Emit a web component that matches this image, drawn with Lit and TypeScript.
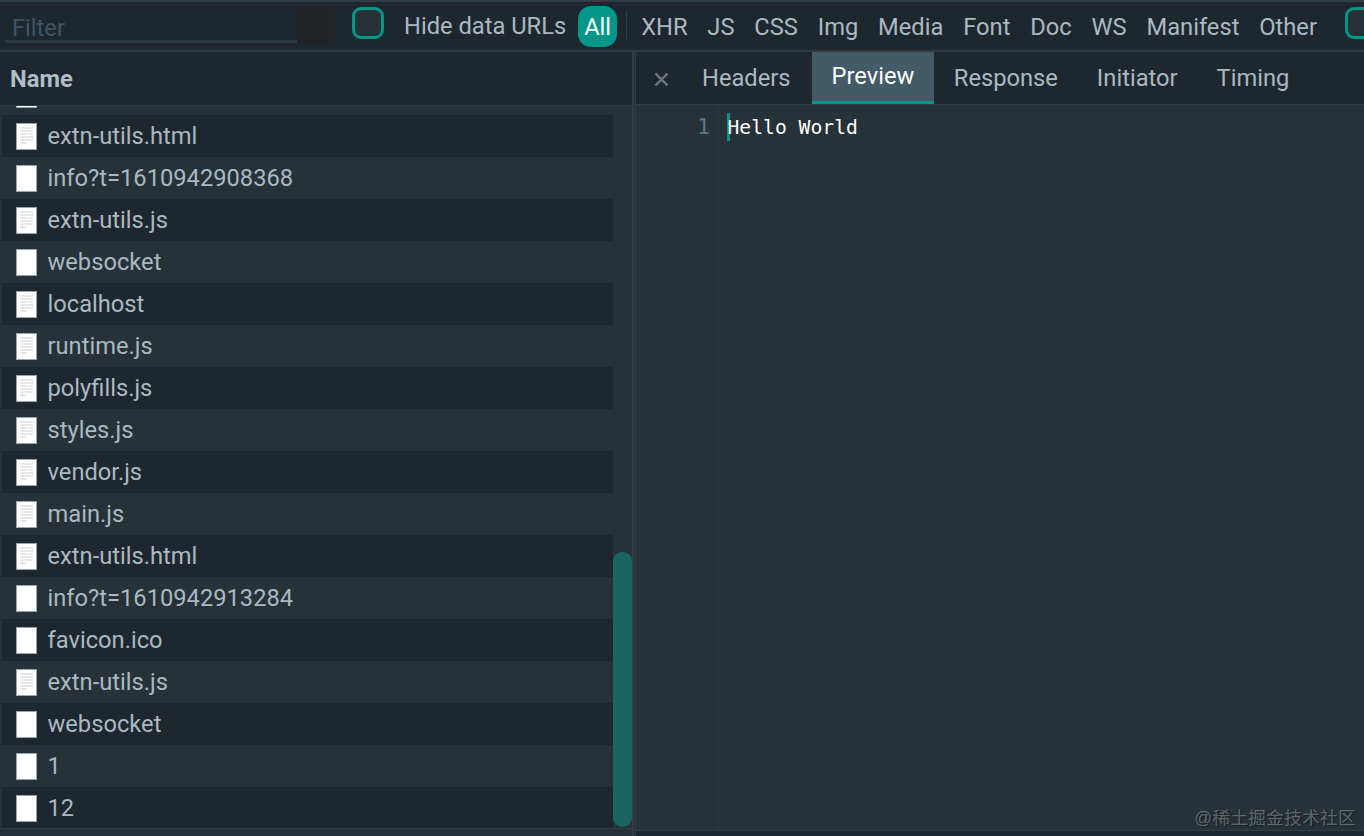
import { LitElement, html, css, svg } from "lit";
import { customElement } from "lit/decorators.js";

type Row = { name: string; doc: boolean };
const rows: Row[] = [
  { name: "", doc: true },
  { name: "extn-utils.html", doc: true },
  { name: "info?t=1610942908368", doc: false },
  { name: "extn-utils.js", doc: true },
  { name: "websocket", doc: false },
  { name: "localhost", doc: true },
  { name: "runtime.js", doc: true },
  { name: "polyfills.js", doc: true },
  { name: "styles.js", doc: true },
  { name: "vendor.js", doc: true },
  { name: "main.js", doc: true },
  { name: "extn-utils.html", doc: true },
  { name: "info?t=1610942913284", doc: false },
  { name: "favicon.ico", doc: false },
  { name: "extn-utils.js", doc: true },
  { name: "websocket", doc: false },
  { name: "1", doc: false },
  { name: "12", doc: false },
];
const types = ["XHR", "JS", "CSS", "Img", "Media", "Font", "Doc", "WS", "Manifest", "Other"];
const tabs = ["Headers", "Preview", "Response", "Initiator", "Timing"];

const fileIcon = (doc: boolean) => html`<svg class="ficon" width="21" height="27" viewBox="0 0 21 27">
  <rect x="0.5" y="0.5" width="20" height="26" fill="#fff" stroke="#9aa4a9" stroke-width="1"></rect>
  ${doc
    ? svg`<g stroke="#e0e0e0" stroke-width="1.4">
        <path d="M4 5h13M4 8h13M4 11h7M12 11h5M4 14h13M4 17h13M4 20h7"></path>
      </g>`
    : ""}
</svg>`;

@customElement("app-root")
export class AppRoot extends LitElement {
  static styles = css`
    :host {
      display: flex;
      flex-direction: column;
      position: relative;
      width: 1364px;
      height: 836px;
      overflow: hidden;
      background: #263238;
      font-family: Roboto, "Noto Sans", sans-serif;
      font-size: 23.7px;
      color: #a9b9c2;
    }
    .toolbar {
      box-sizing: border-box;
      height: 52px;
      flex: none;
      display: flex;
      align-items: flex-start;
      background: #1e272e;
      border-top: 2px solid #2f3d44;
      border-bottom: 2px solid #2f3d44;
      padding-left: 5px;
      white-space: nowrap;
    }
    .filter {
      box-sizing: border-box;
      width: 292px;
      height: 41px;
      flex: none;
      padding: 11px 0 0 7px;
      border-bottom: 3px solid #2a383f;
      color: #3f5566;
      line-height: 30px;
    }
    .clear {
      width: 32px;
      height: 35px;
      flex: none;
      margin-top: 6px;
      background: #222324;
    }
    .check {
      box-sizing: border-box;
      width: 32px;
      height: 32px;
      flex: none;
      margin: 5px 0 0 23px;
      background: #263238;
      border: 3px solid #009688;
      border-radius: 9px;
    }
    .check.end {
      margin-left: 0;
    }
    .label {
      margin: 6px 0 0 20px;
      line-height: 36px;
    }
    .pill {
      width: 39px;
      height: 41px;
      flex: none;
      margin: 4px 0 0 12px;
      line-height: 43px;
      text-align: center;
      background: #009688;
      color: #fff;
      border-radius: 13px;
    }
    .sep {
      width: 1px;
      height: 30px;
      flex: none;
      margin: 8px 14px 0 9px;
      background: #2f3d44;
    }
    .type {
      margin: 7px 19.85px 0 0;
      line-height: 36px;
    }
    .type.last {
      margin-right: 28px;
    }
    .split {
      flex: 1;
      min-height: 0;
      display: flex;
    }
    .left {
      width: 632px;
      flex: none;
      display: flex;
      flex-direction: column;
      position: relative;
    }
    .head {
      box-sizing: border-box;
      height: 54px;
      flex: none;
      padding-left: 10px;
      font-weight: 700;
      line-height: 54px;
      font-size: 23.7px;
      color: #b0bec5;
      background: #1e272e;
      border-bottom: 1px solid #2f3d44;
    }
    .list {
      height: 722px;
      flex: none;
      overflow: hidden;
      padding-left: 2px;
    }
    .rows {
      margin-top: -33px;
      width: 611px;
    }
    .row {
      height: 42px;
      display: flex;
      align-items: center;
      padding-left: 14px;
      background: #263238;
    }
    .row:nth-child(even) {
      background: #1e272e;
    }
    .ficon {
      flex: none;
      margin-right: 10.5px;
    }
    .foot-l {
      flex: 1;
      border-top: 1px solid #2f3d44;
    }
    .thumb {
      position: absolute;
      left: 613px;
      top: 500px;
      width: 19px;
      height: 275px;
      background: #1a6562;
      border-radius: 9px 9px 10px 10px;
    }
    .splitter {
      width: 4px;
      flex: none;
      box-sizing: border-box;
      background: #263238;
      border-left: 2px solid #2f3d44;
      border-right: 1px solid #2f3d44;
    }
    .right {
      flex: 1;
      min-width: 0;
      display: flex;
      flex-direction: column;
    }
    .tabbar {
      height: 52px;
      flex: none;
      display: flex;
      background: #1e272e;
      border-bottom: 1px solid #2f3d44;
      align-items: stretch;
    }
    .close {
      box-sizing: border-box;
      width: 46.5px;
      flex: none;
      display: flex;
      align-items: center;
      justify-content: center;
      padding: 2px 0 0 4px;
    }
    .tab {
      padding: 0 19.5px;
      line-height: 53px;
    }
    .tab.on {
      box-sizing: border-box;
      padding: 0 20px;
      margin-left: 1.5px;
      background: #425b67;
      color: #fff;
      line-height: 49px;
      border-bottom: 3px solid #009688;
    }
    .editor {
      flex: 1;
      min-height: 0;
      display: flex;
    }
    .gutter {
      box-sizing: border-box;
      width: 83px;
      flex: none;
      border-right: 1px solid #2b3840;
      padding: 8px 8px 0 0;
      text-align: right;
      color: #5b7686;
      font-family: "DejaVu Sans Mono", monospace;
      font-size: 21.5px;
      line-height: 28px;
    }
    .code {
      margin: 8px 0 0 8px;
      border-left: 3px solid #009688;
      height: 28px;
      font-family: "DejaVu Sans Mono", monospace;
      font-size: 19.7px;
      line-height: 30px;
      color: #fff;
      white-space: pre;
    }
    .code span {
      margin-left: -2.5px;
    }
    .foot-r {
      height: 5px;
      flex: none;
      border-top: 1px solid #2f3d44;
      background: #1e272e;
    }
    .mark {
      position: absolute;
      right: 8px;
      bottom: 7px;
      font-family: "Liberation Sans", "Noto Sans CJK SC", sans-serif;
      font-size: 17.6px;
      letter-spacing: 0.35px;
      line-height: 22px;
      color: rgba(255, 255, 255, 0.3);
      text-shadow: 1px 1px 1px rgba(0, 0, 0, 0.45);
    }
  `;

  render() {
    return html`
      <div class="toolbar">
        <div class="filter">Filter</div>
        <div class="clear"></div>
        <div class="check"></div>
        <div class="label">Hide data URLs</div>
        <div class="pill">All</div>
        <div class="sep"></div>
        ${types.map((t, i) => html`<div class="type ${i === types.length - 1 ? "last" : ""}">${t}</div>`)}
        <div class="check end"></div>
      </div>
      <div class="split">
        <div class="left">
          <div class="head">Name</div>
          <div class="list">
            <div class="rows">
              ${rows.map((r) => html`<div class="row">${fileIcon(r.doc)}${r.name ? html`<span>${r.name}</span>` : ""}</div>`)}
            </div>
          </div>
          <div class="foot-l"></div>
          <div class="thumb"></div>
        </div>
        <div class="splitter"></div>
        <div class="right">
          <div class="tabbar">
            <div class="close">
              <svg width="15" height="15" viewBox="0 0 15 15"><path d="M1.5 1.5l12 12M13.5 1.5l-12 12" stroke="#70787d" stroke-width="2.4"></path></svg>
            </div>
            ${tabs.map((t) => html`<div class="tab ${t === "Preview" ? "on" : ""}">${t}</div>`)}
          </div>
          <div class="editor">
            <div class="gutter">1</div>
            <div class="code"><span>Hello World</span></div>
          </div>
          <div class="foot-r"></div>
        </div>
      </div>
      <div class="mark">@稀土掘金技术社区</div>
    `;
  }
}
